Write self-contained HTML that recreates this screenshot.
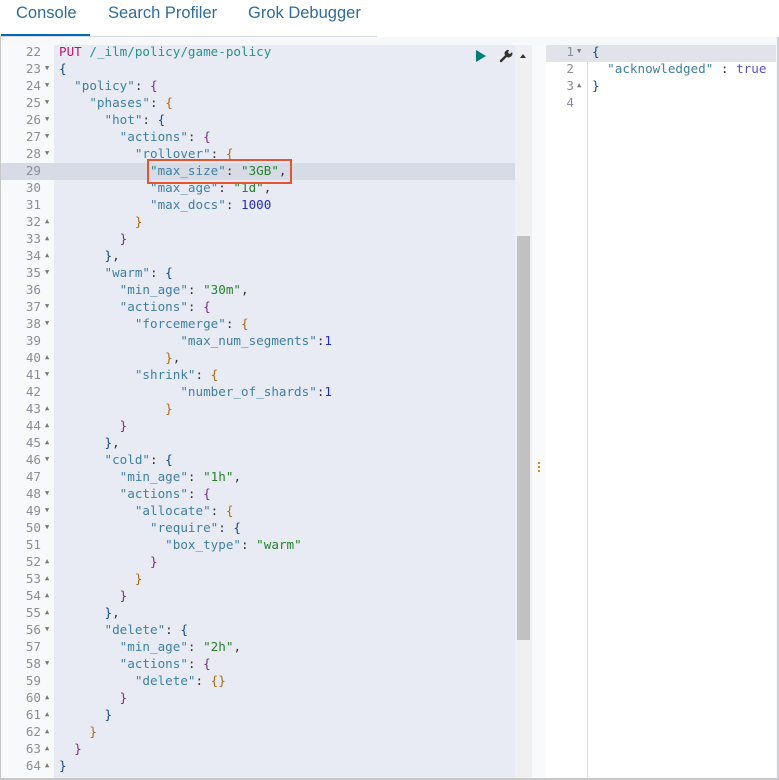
<!DOCTYPE html>
<html><head><meta charset="utf-8"><style>
*{margin:0;padding:0;box-sizing:border-box}
body{width:779px;height:780px;background:#fff;position:relative;overflow:hidden;font-family:"DejaVu Sans Mono","Liberation Mono",monospace}
.tabs{position:absolute;left:0;top:0;width:377px;height:37px;border-bottom:1px solid #d3dae6;font-family:"Liberation Sans",sans-serif;font-size:16.5px;color:#2f6c9a}
.tabs span{position:absolute;top:4px}
.ul{position:absolute;left:1px;top:34px;width:89px;height:2px;background:#006bb4}
.frame{position:absolute;left:0;top:37px;width:779px;height:743px;border-left:1px solid #c8c8c8;border-right:2px solid #d0d0d8;border-bottom:2px solid #c8c8c8;background:#f7f8fa}
.gut{position:absolute;left:1px;top:45px;width:53px;height:733px;background:#f8f9fb}
.code{position:absolute;left:54px;top:45px;width:461px;height:733px;background:#e8ebf4}
.track{position:absolute;left:515px;top:45px;width:17px;height:733px;background:#f0f0f0}
.thumb{position:absolute;left:517px;top:236px;width:13px;height:404px;background:#c1c1c1}
.split{position:absolute;left:532px;top:45px;width:14px;height:733px;background:#f9fafc}
.rgut{position:absolute;left:546px;top:45px;width:41px;height:733px;background:#fff}
.rcode{position:absolute;left:587px;top:45px;width:189px;height:733px;background:#fff;border-left:1px solid #dde0e6}
.hl{position:absolute;left:1px;top:163px;width:514px;height:17px;background:#d6dbe5}
.rhl{position:absolute;left:546px;top:45px;width:230px;height:17px;background:#e0e3ea}
.lines{position:absolute;top:43px;font-size:12.6px;line-height:17px;white-space:pre}
.nums{position:absolute;left:0;top:43px;width:41px;text-align:right;font-size:12.6px;line-height:17px;color:#8a8f99;white-space:pre}
.ar{position:absolute;left:45px;top:43px;font-size:7px;line-height:17px;color:#777;white-space:pre}
.k{color:#3f7fa4}.s{color:#25832a}.n{color:#1f2ec7}.m{color:#c3146c}.u{color:#2c8f8f}
.b0{color:#124a8c}.b1{color:#7b2a8a}.b2{color:#b06a12}
.box{position:absolute;left:147px;top:159px;width:145px;height:25px;border:2px solid #e8532f}
</style></head><body>
<div class="tabs"><span style="left:16px">Console</span><span style="left:108px">Search Profiler</span><span style="left:248px">Grok Debugger</span></div>
<div class="ul"></div>
<div class="frame"></div>
<div class="gut"></div><div class="code"></div>
<div class="track"></div><div class="thumb"></div><div class="split"></div>
<div class="rgut"></div><div class="rcode"></div>
<div class="hl"></div><div class="rhl"></div>
<div class="nums">22
23
24
25
26
27
28
29
30
31
32
33
34
35
36
37
38
39
40
41
42
43
44
45
46
47
48
49
50
51
52
53
54
55
56
57
58
59
60
61
62
63
64</div>
<div class="ar"> 
▼
▼
▼
▼
▼
▼
 
 
 
▲
▲
▲
▼
 
▼
▼
 
▲
▼
 
▲
▲
▲
▼
 
▼
▼
▼
 
▲
▲
▲
▲
▼
 
▼
 
▲
▲
▲
▲
▲</div>
<div class="lines" style="left:59px;color:#333"><span class="m">PUT</span> <span class="u">/_ilm/policy/game-policy</span>
<span class="b0">{</span>
  <span class="k">"policy"</span>: <span class="b1">{</span>
    <span class="k">"phases"</span>: <span class="b2">{</span>
      <span class="k">"hot"</span>: <span class="b0">{</span>
        <span class="k">"actions"</span>: <span class="b1">{</span>
          <span class="k">"rollover"</span>: <span class="b2">{</span>
            <span class="k">"max_size"</span>: <span class="s">"3GB"</span>,
            <span class="k">"max_age"</span>: <span class="s">"1d"</span>,
            <span class="k">"max_docs"</span>: <span class="n">1000</span>
          <span class="b2">}</span>
        <span class="b1">}</span>
      <span class="b0">}</span>,
      <span class="k">"warm"</span>: <span class="b0">{</span>
        <span class="k">"min_age"</span>: <span class="s">"30m"</span>,
        <span class="k">"actions"</span>: <span class="b1">{</span>
          <span class="k">"forcemerge"</span>: <span class="b2">{</span>
                <span class="k">"max_num_segments"</span>:<span class="n">1</span>
              <span class="b2">}</span>,
          <span class="k">"shrink"</span>: <span class="b2">{</span>
                <span class="k">"number_of_shards"</span>:<span class="n">1</span>
              <span class="b2">}</span>
        <span class="b1">}</span>
      <span class="b0">}</span>,
      <span class="k">"cold"</span>: <span class="b0">{</span>
        <span class="k">"min_age"</span>: <span class="s">"1h"</span>,
        <span class="k">"actions"</span>: <span class="b1">{</span>
          <span class="k">"allocate"</span>: <span class="b2">{</span>
            <span class="k">"require"</span>: <span class="b0">{</span>
              <span class="k">"box_type"</span>: <span class="s">"warm"</span>
            <span class="b1">}</span>
          <span class="b2">}</span>
        <span class="b1">}</span>
      <span class="b0">}</span>,
      <span class="k">"delete"</span>: <span class="b0">{</span>
        <span class="k">"min_age"</span>: <span class="s">"2h"</span>,
        <span class="k">"actions"</span>: <span class="b1">{</span>
          <span class="k">"delete"</span>: <span class="b2">{}</span>
        <span class="b1">}</span>
      <span class="b0">}</span>
    <span class="b2">}</span>
  <span class="b1">}</span>
<span class="b0">}</span></div>
<div class="box"></div>
<svg style="position:absolute;left:474px;top:49px" width="56" height="14" viewBox="0 0 56 14">
<path d="M2 1 L12 7 L2 13 Z" fill="#017d73"/>
<path d="M27 12 L32 7" stroke="#333" stroke-width="2.4" stroke-linecap="round"/>
<path d="M31 6 A3.5 3.5 0 0 0 36 8 A3.5 3.5 0 0 0 38 3 L36 5 L34 4 L35 1 A3.5 3.5 0 0 0 31 6 Z" fill="#333"/>
<path d="M46 9 L49 5 L52 9 Z" fill="#333"/>
</svg>
<div class="nums" style="left:546px;width:28px">1
2
3
4</div>
<div class="ar" style="left:577px">▼
 
▲</div>
<div class="lines" style="left:592px;color:#333"><span class="b0">{</span>
  <span class="k">"acknowledged"</span> : <span class="n" style="color:#5b4fc9">true</span>
<span class="b0">}</span></div>
<div style="position:absolute;left:538px;top:462px;width:2px;height:12px;background:repeating-linear-gradient(#e08a1e 0 2px,transparent 2px 4px)"></div>
</body></html>
